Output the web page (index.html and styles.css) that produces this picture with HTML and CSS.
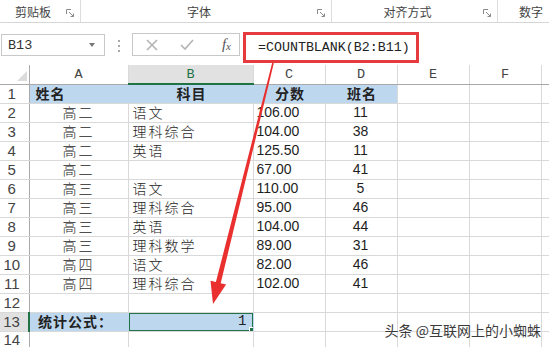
FILE: index.html
```html
<!DOCTYPE html>
<html>
<head>
  <meta charset="utf-8">
  <title>COUNTBLANK 统计空白单元格</title>
  <link rel="stylesheet" href="styles.css">
</head>
<body>
  <div class="ribbon">
    <div class="group g-clip">
      <span class="group-label">剪贴板</span>
      <svg class="launcher" viewBox="0 0 9 9"><path d="M0.5 5V0.5H5M3 3l4.5 4.5M4.5 7.5h3v-3"/></svg>
    </div>
    <div class="group g-font">
      <span class="group-label">字体</span>
      <svg class="launcher" viewBox="0 0 9 9"><path d="M0.5 5V0.5H5M3 3l4.5 4.5M4.5 7.5h3v-3"/></svg>
    </div>
    <div class="group g-align">
      <span class="group-label">对齐方式</span>
      <svg class="launcher" viewBox="0 0 9 9"><path d="M0.5 5V0.5H5M3 3l4.5 4.5M4.5 7.5h3v-3"/></svg>
    </div>
    <div class="group g-num">
      <span class="group-label">数字</span>
    </div>
  </div>

  <div class="formula-bar">
    <div class="name-box">
      <span>B13</span>
      <span class="name-arrow"></span>
    </div>
    <div class="grip"><i></i><i></i><i></i></div>
    <div class="fx-box">
      <svg class="fx-icon" viewBox="0 0 12 12"><path d="M1 1l10 10M11 1L1 11"/></svg>
      <svg class="fx-icon" viewBox="0 0 14 12"><path d="M1 6l4 4 8-9"/></svg>
      <span class="fx">f<sub>x</sub></span>
    </div>
    <div class="formula">=COUNTBLANK(B2:B11)</div>
  </div>

  <table class="sheet">
    <colgroup>
      <col class="w-rh"><col class="w-a"><col class="w-b"><col class="w-n"><col class="w-n"><col class="w-n"><col class="w-n"><col class="w-g">
    </colgroup>
    <tr class="col-heads">
      <td class="corner"><span class="corner-mark"></span></td>
      <td>A</td><td class="sel">B</td><td>C</td><td>D</td><td>E</td><td>F</td><td></td>
    </tr>
    <tr>
      <td class="rh">1</td>
      <td class="fill bold">姓名</td>
      <td class="fill bold c">科目</td>
      <td class="fill bold c">分数</td>
      <td class="fill bold c last">班名</td>
      <td></td><td></td><td></td>
    </tr>
    <tr><td class="rh">2</td><td class="cn c">高二</td><td class="cn">语文</td><td class="num">106.00</td><td class="num c">11</td><td></td><td></td><td></td></tr>
    <tr><td class="rh">3</td><td class="cn c">高二</td><td class="cn">理科综合</td><td class="num">104.00</td><td class="num c">38</td><td></td><td></td><td></td></tr>
    <tr><td class="rh">4</td><td class="cn c">高二</td><td class="cn">英语</td><td class="num">125.50</td><td class="num c">11</td><td></td><td></td><td></td></tr>
    <tr><td class="rh">5</td><td class="cn c">高二</td><td class="cn"></td><td class="num">67.00</td><td class="num c">41</td><td></td><td></td><td></td></tr>
    <tr><td class="rh">6</td><td class="cn c">高三</td><td class="cn">语文</td><td class="num">110.00</td><td class="num c">5</td><td></td><td></td><td></td></tr>
    <tr><td class="rh">7</td><td class="cn c">高三</td><td class="cn">理科综合</td><td class="num">95.00</td><td class="num c">46</td><td></td><td></td><td></td></tr>
    <tr><td class="rh">8</td><td class="cn c">高三</td><td class="cn">英语</td><td class="num">104.00</td><td class="num c">44</td><td></td><td></td><td></td></tr>
    <tr><td class="rh">9</td><td class="cn c">高三</td><td class="cn">理科数学</td><td class="num">89.00</td><td class="num c">31</td><td></td><td></td><td></td></tr>
    <tr><td class="rh">10</td><td class="cn c">高四</td><td class="cn">语文</td><td class="num">82.00</td><td class="num c">46</td><td></td><td></td><td></td></tr>
    <tr><td class="rh">11</td><td class="cn c">高四</td><td class="cn">理科综合</td><td class="num">102.00</td><td class="num c">41</td><td></td><td></td><td></td></tr>
    <tr><td class="rh">12</td><td></td><td></td><td></td><td></td><td></td><td></td><td></td></tr>
    <tr>
      <td class="rh rh-sel">13</td>
      <td class="fill bold label">统计公式：</td>
      <td class="fill active">1</td>
      <td></td><td></td><td></td><td></td><td></td>
    </tr>
    <tr class="row-last"><td class="rh">14</td><td></td><td></td><td></td><td></td><td></td><td></td><td></td></tr>
  </table>

  <svg class="arrow" viewBox="0 0 549 347">
    <polygon points="273.8,63.2 272.2,62.8 215.9,282.1 210.5,280.8 213,304 226.1,284.6 220.7,283.3"/>
  </svg>

  <div class="watermark">头条 @互联网上的小蜘蛛</div>
</body>
</html>
```

FILE: styles.css
```css
* {
  margin: 0;
  padding: 0;
  box-sizing: border-box;
}

body {
  width: 549px;
  height: 347px;
  overflow: hidden;
  position: relative;
  background: #fff;
  font-family: "Noto Sans CJK SC", sans-serif;
  color: #222;
}

/* Ribbon group labels */
.ribbon {
  display: flex;
  height: 23px;
  border-bottom: 1px solid #d6d6d6;
  background: #fff;
}

.group {
  display: flex;
  align-items: center;
  height: 22px;
  border-right: 1px solid #dcdcdc;
  padding-right: 5px;
}

.group-label {
  flex: 1;
  text-align: center;
  font-size: 12px;
  color: #444;
  line-height: 22px;
  padding-top: 2px;
}

.g-clip { width: 81px; }
.g-font { width: 251px; }
.g-align { width: 166px; }

.g-num {
  flex: 1;
  border-right: none;
}

.g-num .group-label {
  flex: none;
  padding-left: 21px;
}

.launcher {
  width: 9px;
  height: 9px;
  margin-top: 5px;
  fill: none;
  stroke: #8a8a8a;
  stroke-width: 1;
}

/* Formula bar */
.formula-bar {
  display: flex;
  align-items: flex-start;
  height: 42px;
  background: #fff;
}

.name-box {
  display: flex;
  align-items: center;
  justify-content: space-between;
  width: 104px;
  height: 22px;
  margin: 11px 0 0 1px;
  padding: 0 9px 0 6px;
  border: 1px solid #c8c8c8;
  font-family: "Liberation Mono", monospace;
  font-size: 13.5px;
  color: #333;
}

.name-arrow {
  width: 0;
  height: 0;
  border-left: 3.5px solid transparent;
  border-right: 3.5px solid transparent;
  border-top: 4px solid #777;
}

.grip {
  display: flex;
  flex-direction: column;
  gap: 3px;
  width: 27px;
  margin-top: 17px;
  align-items: center;
}

.grip i {
  width: 2px;
  height: 2px;
  background: #a8a8a8;
}

.fx-box {
  display: flex;
  align-items: center;
  width: 108px;
  height: 23px;
  margin-top: 10px;
  padding: 0 8px 0 13px;
  border: 1px solid #c8c8c8;
}

.fx-icon {
  width: 12px;
  height: 12px;
  margin-right: 22px;
  fill: none;
  stroke: #b4b4b4;
  stroke-width: 1.6;
}

.fx-icon + .fx-icon {
  width: 14px;
  margin-right: 0;
}

.fx {
  margin-left: auto;
  font-family: "Liberation Serif", serif;
  font-style: italic;
  font-size: 15px;
  color: #555;
  line-height: 1;
}

.fx sub {
  font-size: 11px;
  vertical-align: -1px;
}

.formula {
  width: 176px;
  height: 31px;
  margin: 9px 0 0 3px;
  padding: 0 0 0 12px;
  border: 3px solid #e53b3f;
  font-family: "Liberation Mono", monospace;
  font-size: 13.3px;
  line-height: 26px;
  color: #222;
  white-space: nowrap;
}

/* Worksheet grid */
.sheet {
  border-collapse: collapse;
  table-layout: fixed;
  width: 549px;
}

.w-rh { width: 29px; }
.w-a { width: 99px; }
.w-b { width: 125px; }
.w-n { width: 72px; }
.w-g { width: 8px; }

.sheet tr {
  height: 19px;
}

.sheet td {
  border: 1px solid #d9d9d9;
  padding: 0 4px;
  white-space: nowrap;
  overflow: hidden;
  font-size: 14px;
  line-height: 17px;
}

.sheet .row-last td {
  vertical-align: top;
  line-height: 16px;
}

.col-heads td {
  text-align: center;
  font-family: "Liberation Mono", monospace;
  font-size: 13.5px;
  color: #444;
  border-top: none;
  border-bottom-color: #a9a9a9;
  padding: 0;
}

.col-heads td.sel {
  background: #e1e1e1;
  color: #217346;
  border-bottom: 2px solid #217346;
}

.sheet td.corner {
  border-left: none;
  border-right-color: #a9a9a9;
  text-align: right;
  vertical-align: bottom;
  padding: 0 2px 3px 0;
  line-height: 0;
}

.corner-mark {
  display: inline-block;
  width: 0;
  height: 0;
  border-left: 10px solid transparent;
  border-bottom: 10px solid #dcdcdc;
}

.sheet td.rh {
  border-left: none;
  border-right-color: #a9a9a9;
  padding: 0 5px 0 0;
  text-align: center;
  font-family: "Liberation Sans", sans-serif;
  font-size: 15px;
  color: #444;
}

.sheet td.rh-sel {
  background: #e1e1e1;
  border-right: 2px solid #217346;
}

.fill {
  background: #bdd7ee;
  border-right-color: #bdd7ee !important;
}

.fill.last {
  border-right-color: #d9d9d9 !important;
}

.bold {
  font-weight: 700;
  letter-spacing: 1px;
  padding-left: 6px !important;
}

.label {
  padding-left: 8px !important;
}

.cn {
  font-weight: 300;
  letter-spacing: 2px;
  color: #1e1e1e;
}

.c {
  text-align: center;
}

.num {
  font-family: "Liberation Sans", sans-serif;
  font-size: 15px;
  color: #1e1e1e;
  padding-left: 3px !important;
}

.active {
  position: relative;
  text-align: right;
  font-family: "Liberation Mono", monospace;
  font-size: 14px;
  padding-right: 6px !important;
}

.active::after {
  content: "";
  position: absolute;
  left: -1px;
  top: -1px;
  right: -1px;
  bottom: -1px;
  border: 2px solid #217346;
}

.active::before {
  content: "";
  position: absolute;
  right: -3px;
  bottom: -3px;
  width: 5px;
  height: 5px;
  background: #217346;
  border: 1px solid #fff;
  z-index: 1;
}

/* Annotation overlays */
.arrow {
  position: absolute;
  left: 0;
  top: 0;
  width: 549px;
  height: 347px;
  pointer-events: none;
  fill: #ea2f2f;
}

.watermark {
  position: absolute;
  right: 8px;
  top: 320px;
  font-size: 14px;
  color: #3a3a3a;
  text-shadow: 0 0 2px #fff, 0 0 2px #fff;
}
```
